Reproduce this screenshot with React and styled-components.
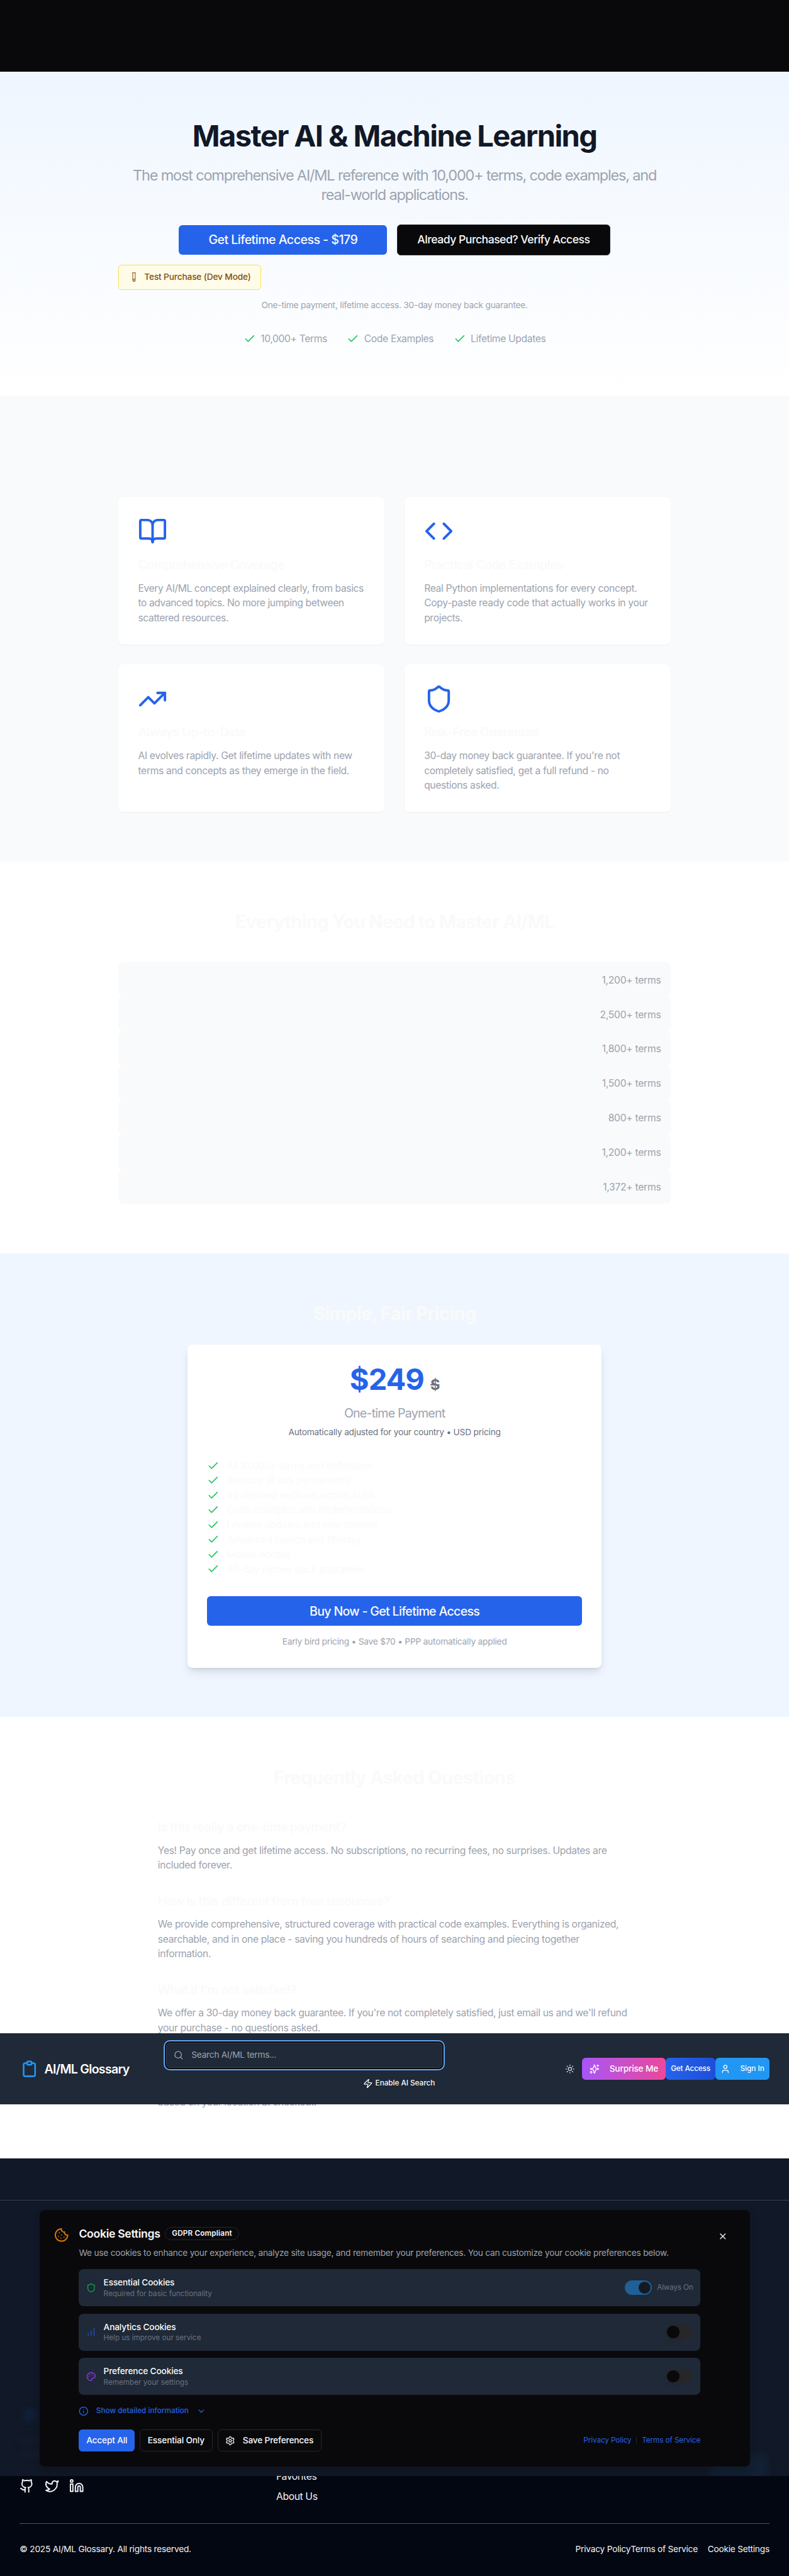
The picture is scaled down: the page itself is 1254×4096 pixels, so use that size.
import React from "react";
import styled, { createGlobalStyle, css } from "styled-components";
import {
  BookOpen, Code, TrendingUp, Shield, Check, Search, Zap, Sun, Sparkles, User,
  Cookie, X, ChartNoAxesColumnIncreasing, Palette, Info, ChevronDown, Settings, Github, Twitter, Linkedin,
} from "lucide-react";

const GlobalStyle = createGlobalStyle`
  *, *::before, *::after { box-sizing: border-box; }
  html, body { margin: 0; padding: 0; background: #030712; overflow-x: hidden; }
  h1, h2, h3, p, ul { margin: 0; padding: 0; font-weight: inherit; }
  ul { list-style: none; }
  svg { display: block; flex: none; }
`;

const Page = styled.div`
  position: relative;
  width: 1280px;
  height: 4180px;
  zoom: 0.9799;
  overflow: hidden;
  font-family: Inter, "Liberation Sans", sans-serif;
  font-size: 16px;
  line-height: 24px;
  letter-spacing: -0.023em;
  color: #fafafa;
`;

const TopBar = styled.div`
  height: 116px;
  background: #09090b;
`;

const Section = styled.section`
  padding: 80px 0;
  background: ${(p) => p.$bg || "#fff"};
`;
const Container = styled.div`
  width: ${(p) => p.$w || 896}px;
  margin: 0 auto;
`;
const Heading = styled.h2`
  font-size: 30px;
  line-height: 36px;
  height: 36px;
  font-weight: 700;
  letter-spacing: -0.029em;
  text-align: center;
  color: #fafafa;
  margin-bottom: ${(p) => p.$mb || 48}px;
`;

const HeroTitle = styled.h1`
  font-size: 48px;
  line-height: 48px;
  font-weight: 700;
  letter-spacing: -0.0335em;
  color: #111827;
  text-align: center;
  margin-bottom: 24px;
`;
const HeroLead = styled.p`
  font-size: 24px;
  line-height: 32px;
  letter-spacing: -0.0503em;
  padding: 0 16px;
  color: #9ca3af;
  text-align: center;
  margin-bottom: 32px;
`;
const HeroActions = styled.div`
  display: flex;
  justify-content: center;
  align-items: center;
  gap: 16px;
`;
const BigButton = styled.button`
  display: flex;
  align-items: center;
  justify-content: center;
  font: 500 ${(p) => (p.$dark ? 18 : 20)}px/28px Inter, sans-serif;
  letter-spacing: ${(p) => (p.$full ? -0.0353 : p.$dark ? -0.0292 : -0.027)}em;
  border-radius: 6px;
  height: ${(p) => (p.$dark ? 50 : 48)}px;
  width: ${(p) => (p.$full ? "100%" : "auto")};
  padding: ${(p) => (p.$dark ? "0 32px" : "2px 48px 0")};
  color: #fafafa;
  background: ${(p) => (p.$dark ? "#09090b" : "#2563eb")};
  border: ${(p) => (p.$dark ? "1px solid #27272a" : "0")};
`;
const DevButton = styled.button`
  display: flex;
  align-items: center;
  gap: 13px;
  height: 40px;
  margin-top: 16px;
  padding: 0 16px 0 21px;
  font: 500 14px/20px Inter, sans-serif;
  letter-spacing: -0.0117em;
  color: #854d0e;
  background: #fefce8;
  border: 1px solid #fde047;
  border-radius: 6px;
`;
const Note = styled.p`
  margin-top: 16px;
  font-size: 14px;
  line-height: 20px;
  letter-spacing: -0.015em;
  text-align: center;
  color: ${(p) => p.$color || "#9ca3af"};
`;
const Perks = styled.div`
  display: flex;
  justify-content: center;
  gap: 32px;
  margin-top: 32px;
  color: #9ca3af;
`;
const Perk = styled.div`
  display: flex;
  align-items: center;
  gap: ${(p) => p.$gap || 8}px;
`;

const CardGrid = styled.div`
  display: grid;
  grid-template-columns: 1fr 1fr;
  gap: 32px;
  padding-top: 84px;
`;
const Card = styled.article`
  height: 240px;
  padding: 32px;
  background: #fff;
  border-radius: 8px;
  box-shadow: 0 1px 2px rgba(0, 0, 0, 0.05);
`;
const SubHeading = styled.h3`
  font-size: 20px;
  line-height: 28px;
  font-weight: 600;
  letter-spacing: -0.029em;
  color: #fafafa;
  padding-top: 1px;
  margin: ${(p) => p.$mt || 0}px 0 11px;
`;
const Body = styled.p`
  padding-top: 0.6px;
  margin-bottom: -0.6px;
  letter-spacing: ${(p) => (p.$tight ? -0.0268 : -0.0225)}em;
  color: #9ca3af;
`;

const CategoryRow = styled.li`
  display: flex;
  justify-content: flex-end;
  padding: 16.6px 16px 15.4px;
  background: #f9fafb;
  border-radius: 8px;
  letter-spacing: -0.017em;
  color: #9ca3af;
`;

const PriceCard = styled.div`
  padding: 32px;
  background: #fff;
  border-radius: 8px;
  text-align: center;
  box-shadow: 0 10px 15px -3px rgba(0, 0, 0, 0.1), 0 4px 6px -4px rgba(0, 0, 0, 0.1);
`;
const Price = styled.div`
  font-size: 48px;
  line-height: 48px;
  height: 48.8px;
  font-weight: 700;
  letter-spacing: -0.021em;
  color: #2563eb;
`;
const OldPrice = styled.span`
  font-size: 24px;
  line-height: 32px;
  color: #6b7280;
  text-decoration: line-through;
`;
const PriceKind = styled.p`
  font-size: 20px;
  line-height: 28px;
  letter-spacing: -0.0396em;
  color: #9ca3af;
  margin: 17.4px 0 -9.4px;
`;
const Included = styled.ul`
  margin: 32px 0;
  color: #fafafa;
`;

const Faq = styled.div`
  margin-bottom: 32px;
`;
const FaqTail = styled.div`
  height: 88px;
  display: flex;
  align-items: flex-end;
`;

const Nav = styled.header`
  position: absolute;
  left: 0;
  top: 3299px;
  width: 1280px;
  height: 116px;
  display: flex;
  align-items: center;
  padding: 0 32px;
  background: #1f2937;
  box-shadow: 0 1px 2px rgba(0, 0, 0, 0.05);
`;
const Brand = styled.div`
  display: flex;
  align-items: center;
  gap: 8px;
  width: 237.5px;
`;
const BrandName = styled.span`
  padding-top: 2px;
  font-size: 20px;
  line-height: 28px;
  font-weight: 600;
  letter-spacing: -0.0369em;
  color: #fff;
`;
const SearchArea = styled.div`
  width: 448px;
  height: 84px;
  align-self: flex-start;
  padding-top: 16px;
`;
const SearchBox = styled.div`
  display: flex;
  align-items: center;
  gap: 13px;
  height: 40px;
  padding: 0 11px;
  border: 1px solid #374151;
  border-radius: 6px;
  font-size: 14px;
  letter-spacing: -0.0178em;
  color: #9ca3af;
  background: #1f2937;
  box-shadow: 0 0 0 2px #09090b, 0 0 0 4px #60a5fa;
`;
const AiToggle = styled.div`
  display: flex;
  align-items: center;
  justify-content: flex-end;
  gap: 4px;
  padding: 18px 12px 0 0;
  font-size: 12px;
  line-height: 16px;
  font-weight: 500;
  letter-spacing: -0.0028em;
`;
const NavActions = styled.div`
  display: flex;
  align-items: center;
  margin-left: auto;
`;
const ThemeIcon = styled.div`
  padding: 0 12px;
  color: #d1d5db;
`;
const NavButton = styled.button`
  display: flex;
  align-items: center;
  gap: 16px;
  height: 36px;
  padding: 0 ${(p) => p.$pad || 8.3}px;
  border: 0;
  border-radius: 6px;
  font: 500 ${(p) => p.$size || 12}px/16px Inter, sans-serif;
  letter-spacing: ${(p) => p.$ls || 0}em;
  color: #fff;
  background: ${(p) => p.$bg};
`;

const FooterTop = styled.div`
  height: 67px;
  background: #111827;
`;
const CookieDock = styled.div`
  position: relative;
  height: 449px;
  padding: 16px 64px;
  border-top: 1px solid #374151;
  background: #111827;
  overflow: hidden;
`;
const Glow = styled.div`
  position: absolute;
  left: ${(p) => p.$x}px;
  top: ${(p) => p.$y}px;
  width: ${(p) => p.$w}px;
  height: ${(p) => p.$h}px;
  border-radius: 6px;
  background: ${(p) => p.$c};
  filter: blur(5px);
`;
const CookieCard = styled.div`
  position: relative;
  display: flex;
  gap: 16px;
  height: 416px;
  padding: 24px;
  border-radius: 8px;
  background: #09090b;
  box-shadow: 0 8px 14px rgba(0, 0, 0, 0.18);
`;
const CookieIcon = styled.div`
  padding-top: 4px;
  color: #d97706;
`;
const CookieBody = styled.div`
  flex: 1;
`;
const CookieTitle = styled.div`
  display: flex;
  align-items: center;
  gap: 8px;
  height: 28px;
  font-size: 18px;
  line-height: 28px;
  font-weight: 600;
  letter-spacing: -0.0174em;
`;
const Badge = styled.span`
  height: 22px;
  padding: 0 10px;
  border: 1px solid #27272a;
  border-radius: 11px;
  font-size: 12px;
  line-height: 20px;
  font-weight: 600;
  letter-spacing: 0.0123em;
`;
const CookieText = styled.p`
  margin: 8px 0 16px;
  font-size: 14px;
  line-height: 20px;
  letter-spacing: -0.0164em;
  color: #9ca3af;
`;
const CookieRow = styled.div`
  display: flex;
  align-items: center;
  gap: 12px;
  height: 60px;
  padding: 12px;
  margin-bottom: 12px;
  border-radius: 8px;
  background: #1f2937;
  color: ${(p) => p.$color};
`;
const RowText = styled.div`
  flex: 1;
  font-size: 14px;
  line-height: 20px;
  font-weight: 500;
  letter-spacing: -0.0116em;
  color: #fafafa;
`;
const Muted = styled.div`
  font-size: 12px;
  line-height: 16px;
  font-weight: 400;
  letter-spacing: ${(p) => p.$ls || -0.0022}em;
  color: #6b7280;
`;
const Toggle = styled.div`
  display: flex;
  justify-content: ${(p) => (p.$on ? "flex-end" : "flex-start")};
  width: 44px;
  height: 24px;
  padding: 2px;
  border-radius: 12px;
  background: ${(p) => (p.$on ? "#206097" : "#27272a")};
  &::after {
    content: "";
    width: 20px;
    height: 20px;
    border-radius: 50%;
    background: ${(p) => (p.$on ? "#141a22" : "#09090b")};
    box-shadow: 0 8px 12px -3px rgba(0, 0, 0, 0.1);
  }
`;
const Details = styled.div`
  display: flex;
  align-items: center;
  gap: 12px;
  height: 20px;
  margin: 16px 0 20px;
  font-size: 12px;
  font-weight: 500;
  letter-spacing: 0.001em;
  color: #2563eb;
`;
const CookieActions = styled.div`
  display: flex;
  align-items: center;
  gap: 8px;
`;
const SmallButton = styled.button`
  display: flex;
  align-items: center;
  gap: 12px;
  height: 36px;
  padding: 0 12px;
  border-radius: 6px;
  font: 500 14px/20px Inter, sans-serif;
  letter-spacing: -0.012em;
  color: #fafafa;
  ${(p) =>
    p.$primary
      ? css`
          border: 0;
          background: #2563eb;
        `
      : css`
          border: 1px solid #27272a;
          background: #09090b;
        `}
`;
const LegalLinks = styled.div`
  display: flex;
  align-items: center;
  gap: 8px;
  margin-left: auto;
  font-size: 12px;
  line-height: 16px;
  letter-spacing: -0.009em;
  color: #2563eb;
`;
const Divider = styled.span`
  width: 1px;
  height: 12px;
  background: #27272a;
`;
const CloseButton = styled.div`
  display: flex;
  align-items: center;
  justify-content: center;
  width: 40px;
  height: 36px;
`;

const Footer = styled.footer`
  height: 161px;
  padding: 0 32px;
  background: #030712;
  color: #f3f4f6;
`;
const FooterGrid = styled.div`
  display: flex;
  height: 77px;
  border-bottom: 1px solid #4b5563;
  overflow: hidden;
`;
const Socials = styled.div`
  display: flex;
  gap: 16px;
  width: 416px;
  padding-top: 4px;
`;
const FooterLinks = styled.div`
  display: flex;
  flex-direction: column;
  gap: 8px;
  margin-top: -11.4px;
`;
const Legal = styled.div`
  display: flex;
  padding-top: 32px;
  font-size: 14px;
  line-height: 20px;
  letter-spacing: -0.0162em;
`;
const LegalEnd = styled.div`
  display: flex;
  margin-left: auto;
`;
const CookieLink = styled.span`
  margin-left: 16px;
`;

const BrandMark = () => (
  <svg width="32" height="32" viewBox="0 0 24 24" fill="none" stroke="#2196f3" strokeWidth="2" strokeLinecap="round" strokeLinejoin="round">
    <path d="M9 5H7a2 2 0 00-2 2v12a2 2 0 002 2h10a2 2 0 002-2V7a2 2 0 00-2-2h-2M9 5a2 2 0 002 2h2a2 2 0 002-2M9 5a2 2 0 012-2h2a2 2 0 012 2" />
  </svg>
);
const TubeMark = () => (
  <svg width="7" height="16" viewBox="0 0 7 16" fill="none" stroke="#854d0e" strokeWidth="1">
    <path d="M0 0.8h6M1 1v12a2 2 0 004 0V1M1 11h4" />
    <path d="M1.5 11.5h3v2a1.5 1.5 0 01-3 0z" fill="#854d0e" fillOpacity="0.5" stroke="none" />
  </svg>
);

const cards = [
  [BookOpen, "Comprehensive Coverage", "Every AI/ML concept explained clearly, from basics to advanced topics. No more jumping between scattered resources."],
  [Code, "Practical Code Examples", "Real Python implementations for every concept. Copy-paste ready code that actually works in your projects."],
  [TrendingUp, "Always Up-to-Date", "AI evolves rapidly. Get lifetime updates with new terms and concepts as they emerge in the field."],
  [Shield, "Risk-Free Guarantee", "30-day money back guarantee. If you're not completely satisfied, get a full refund - no questions asked."],
];
const counts = ["1,200+", "2,500+", "1,800+", "1,500+", "800+", "1,200+", "1,372+"];
const included = [
  "All 10,000+ terms and definitions", "Remove all ads permanently", "42 detailed sections across AI/ML",
  "Code examples and implementations", "Lifetime updates and new content", "Advanced search and filtering",
  "Mobile access", "30-day money back guarantee",
];
const faqs = [
  ["Is this really a one-time payment?", "Yes! Pay once and get lifetime access. No subscriptions, no recurring fees, no surprises. Updates are included forever."],
  ["How is this different from free resources?", "We provide comprehensive, structured coverage with practical code examples. Everything is organized, searchable, and in one place - saving you hundreds of hours of searching and piecing together information."],
  ["What if I'm not satisfied?", "We offer a 30-day money back guarantee. If you're not completely satisfied, just email us and we'll refund your purchase - no questions asked."],
];

export default function App() {
  return (
    <Page>
      <GlobalStyle />
      <TopBar />
      <Section $bg="linear-gradient(#eff6ff, #fff)">
        <Container>
          <HeroTitle>Master AI &amp; Machine Learning</HeroTitle>
          <HeroLead>The most comprehensive AI/ML reference with 10,000+ terms, code examples, and real-world applications.</HeroLead>
          <HeroActions>
            <BigButton>Get Lifetime Access - $179</BigButton>
            <BigButton $dark>Already Purchased? Verify Access</BigButton>
          </HeroActions>
          <DevButton><TubeMark />Test Purchase (Dev Mode)</DevButton>
          <Note>One-time payment, lifetime access. 30-day money back guarantee.</Note>
          <Perks>
            {["10,000+ Terms", "Code Examples", "Lifetime Updates"].map((t) => (
              <Perk key={t}><Check size={20} color="#22c55e" />{t}</Perk>
            ))}
          </Perks>
        </Container>
      </Section>

      <Section $bg="#f9fafb">
        <Container>
          <CardGrid>
            {cards.map(([Icon, title, text], i) => (
              <Card key={title}>
                <Icon size={48} color="#2563eb" />
                <SubHeading $mt={16}>{title}</SubHeading>
                <Body $tight={i === 0}>{text}</Body>
              </Card>
            ))}
          </CardGrid>
        </Container>
      </Section>

      <Section>
        <Container>
          <Heading>Everything You Need to Master AI/ML</Heading>
          <ul>{counts.map((c, i) => <CategoryRow key={i}>{c} terms</CategoryRow>)}</ul>
        </Container>
      </Section>

      <Section $bg="#eff6ff">
        <Container $w={672}>
          <Heading $mb={32}>Simple, Fair Pricing</Heading>
          <PriceCard>
            <Price>$249 <OldPrice>$</OldPrice></Price>
            <PriceKind>One-time Payment</PriceKind>
            <Note $color="#6b7280">Automatically adjusted for your country • USD pricing</Note>
            <Included>
              {included.map((t) => (
                <Perk as="li" $gap={12} key={t}><Check size={20} color="#22c55e" />{t}</Perk>
              ))}
            </Included>
            <BigButton $full>Buy Now - Get Lifetime Access</BigButton>
            <Note>Early bird pricing • Save $70 • PPP automatically applied</Note>
          </PriceCard>
        </Container>
      </Section>

      <Section>
        <Container $w={768}>
          <Heading>Frequently Asked Questions</Heading>
          {faqs.map(([q, a]) => (
            <Faq key={q}>
              <SubHeading>{q}</SubHeading>
              <Body>{a}</Body>
            </Faq>
          ))}
          <FaqTail><Body>based on your location at checkout.</Body></FaqTail>
        </Container>
      </Section>

      <FooterTop />
      <CookieDock>
        <Glow $x={1152} $y={412} $w={94} $h={60} $c="#112033" />
        <Glow $x={38} $y={338} $w={20} $h={20} $c="#10203a" />
        <Glow $x={32} $y={386} $w={60} $h={8} $c="#151c2b" />
        <Glow $x={32} $y={408} $w={60} $h={8} $c="#151c2b" />
        <CookieCard>
          <CookieIcon><Cookie size={24} /></CookieIcon>
          <CookieBody>
            <CookieTitle>Cookie Settings<Badge>GDPR Compliant</Badge></CookieTitle>
            <CookieText>We use cookies to enhance your experience, analyze site usage, and remember your preferences. You can customize your cookie preferences below.</CookieText>
            <CookieRow $color="#16a34a">
              <Shield size={16} />
              <RowText>Essential Cookies<Muted>Required for basic functionality</Muted></RowText>
              <Perk><Toggle $on /><Muted $ls={-0.0176}>Always On</Muted></Perk>
            </CookieRow>
            <CookieRow $color="#1d4ed8">
              <ChartNoAxesColumnIncreasing size={16} />
              <RowText>Analytics Cookies<Muted>Help us improve our service</Muted></RowText>
              <Toggle />
            </CookieRow>
            <CookieRow $color="#9333ea">
              <Palette size={16} />
              <RowText>Preference Cookies<Muted>Remember your settings</Muted></RowText>
              <Toggle />
            </CookieRow>
            <Details><Info size={16} />Show detailed information<ChevronDown size={16} /></Details>
            <CookieActions>
              <SmallButton $primary>Accept All</SmallButton>
              <SmallButton>Essential Only</SmallButton>
              <SmallButton><Settings size={16} />Save Preferences</SmallButton>
              <LegalLinks>Privacy Policy<Divider />Terms of Service</LegalLinks>
            </CookieActions>
          </CookieBody>
          <CloseButton><X size={16} /></CloseButton>
        </CookieCard>
      </CookieDock>
      <Footer>
        <FooterGrid>
          <Socials><Github size={24} /><Twitter size={24} /><Linkedin size={24} /></Socials>
          <FooterLinks><span>Favorites</span><span>About Us</span></FooterLinks>
        </FooterGrid>
        <Legal>
          © 2025 AI/ML Glossary. All rights reserved.
          <LegalEnd><span>Privacy Policy</span><span>Terms of Service</span><CookieLink>Cookie Settings</CookieLink></LegalEnd>
        </Legal>
      </Footer>

      <Nav>
        <Brand><BrandMark /><BrandName>AI/ML Glossary</BrandName></Brand>
        <SearchArea>
          <SearchBox><Search size={16} />Search AI/ML terms...</SearchBox>
          <AiToggle><Zap size={16} />Enable AI Search</AiToggle>
        </SearchArea>
        <NavActions>
          <ThemeIcon><Sun size={16} /></ThemeIcon>
          <NavButton $bg="linear-gradient(to right, #a855f7, #ec4899)" $pad={12.3} $size={14} $ls={-0.015}><Sparkles size={16} />Surprise Me</NavButton>
          <NavButton $bg="linear-gradient(to right, #2563eb, #1d4ed8)" $ls={-0.0129}>Get Access</NavButton>
          <NavButton $bg="#2196f3"><User size={16} />Sign In</NavButton>
        </NavActions>
      </Nav>
    </Page>
  );
}
